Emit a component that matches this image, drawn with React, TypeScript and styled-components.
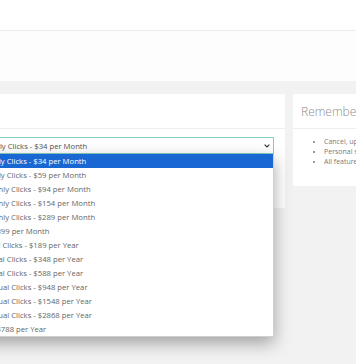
import React from "react";
import styled, { createGlobalStyle } from "styled-components";

const GlobalStyle = createGlobalStyle`
  html, body {
    margin: 0;
    padding: 0;
    overflow: hidden;
  }
  body {
    font-family: "Open Sans", "Liberation Sans", sans-serif;
    background: #f2f2f2;
  }
`;

const Page = styled.div`
  width: 356px;
  height: 364px;
  overflow: hidden;
  display: flex;
  flex-direction: column;
  background: #f2f2f2;
`;

const TopBar = styled.header`
  flex: none;
  height: 30px;
  background: #ffffff;
  border-bottom: 1px solid #ececec;
`;

const SubHeader = styled.div`
  flex: none;
  height: 50px;
  background: #fdfdfd;
`;

const Main = styled.main`
  flex: 1;
  padding-top: 13px;
`;

const Row = styled.div`
  display: flex;
  align-items: flex-start;
  gap: 8px;
  margin-left: -54px;
`;

const Card = styled.section<{ $width: number }>`
  flex: none;
  width: ${(p) => p.$width}px;
  background: #ffffff;
`;

const CardHeader = styled.div`
  box-sizing: border-box;
  height: 35px;
  padding: 0 8px;
  display: flex;
  align-items: center;
  border-bottom: 1px solid #efefef;
`;

const CardTitle = styled.h3`
  margin: 0;
  font-size: 12px;
  font-weight: 300;
  color: #8c8c8c;
  white-space: nowrap;
`;

const PlanBody = styled.div`
  padding: 8px 11px 54px 10px;
`;

const SelectWrap = styled.div`
  position: relative;
`;

const SelectBox = styled.div`
  box-sizing: border-box;
  height: 17px;
  display: flex;
  align-items: center;
  justify-content: space-between;
  padding: 0 3px 0 4px;
  border: 1px solid #86d0c2;
  background: #ffffff;
  font-size: 7.7px;
  color: #555555;
  white-space: nowrap;
`;

const Chevron = styled.svg`
  flex: none;
  width: 6px;
  height: 4px;
`;

const OptionList = styled.ul`
  position: absolute;
  top: 100%;
  left: 0;
  right: 0;
  margin: 0;
  padding: 0;
  list-style: none;
  background: #ffffff;
  border: 1px solid #cfcfcf;
  border-top: none;
  box-shadow: 0 6px 16px rgba(0, 0, 0, 0.34);
  z-index: 10;
`;

const OptionItem = styled.li<{ $selected?: boolean }>`
  height: 14px;
  line-height: 14px;
  padding-left: 3px;
  font-size: 7.7px;
  white-space: nowrap;
  color: ${(p) => (p.$selected ? "#ffffff" : "#666666")};
  background: ${(p) => (p.$selected ? "#1967d2" : "transparent")};
`;

const InfoBody = styled.div`
  padding: 8px 8px 19px 8px;
`;

const InfoList = styled.ul`
  margin: 0;
  padding-left: 23px;
  font-size: 7px;
  line-height: 10px;
  color: #7a7a7a;
  white-space: nowrap;
`;

const plans = [
  "500 Monthly Clicks - $34 per Month",
  "750 Monthly Clicks - $59 per Month",
  "1500 Monthly Clicks - $94 per Month",
  "2500 Monthly Clicks - $154 per Month",
  "5000 Monthly Clicks - $289 per Month",
  "Agency - $399 per Month",
  "500 Annual Clicks - $189 per Year",
  "1000 Annual Clicks - $348 per Year",
  "2000 Annual Clicks - $588 per Year",
  "10000 Annual Clicks - $948 per Year",
  "20000 Annual Clicks - $1548 per Year",
  "50000 Annual Clicks - $2868 per Year",
  "Agency - $4788 per Year",
];

const perks = [
  "Cancel, upgrade or downgrade anytime",
  "Personal support",
  "All features included",
];

export default function App() {
  const selected = 0;
  return (
    <Page>
      <GlobalStyle />
      <TopBar />
      <SubHeader />
      <Main>
        <Row>
          <Card $width={339}>
            <CardHeader>
              <CardTitle>Plan</CardTitle>
            </CardHeader>
            <PlanBody>
              <SelectWrap>
                <SelectBox>
                  <span>{plans[selected]}</span>
                  <Chevron viewBox="0 0 6 4">
                    <path d="M0.6 0.6 L3 3 L5.4 0.6" fill="none" stroke="#333" strokeWidth="1.1" />
                  </Chevron>
                </SelectBox>
                <OptionList>
                  {plans.map((p, i) => (
                    <OptionItem key={p} $selected={i === selected}>
                      {p}
                    </OptionItem>
                  ))}
                </OptionList>
              </SelectWrap>
            </PlanBody>
          </Card>
          <Card $width={220}>
            <CardHeader>
              <CardTitle>Remember</CardTitle>
            </CardHeader>
            <InfoBody>
              <InfoList>
                {perks.map((t) => (
                  <li key={t}>{t}</li>
                ))}
              </InfoList>
            </InfoBody>
          </Card>
        </Row>
      </Main>
    </Page>
  );
}
